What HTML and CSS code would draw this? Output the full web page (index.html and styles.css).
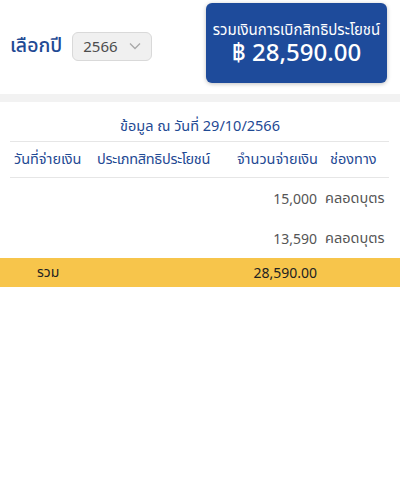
FILE: index.html
```html
<!DOCTYPE html>
<html lang="th">
<head>
<meta charset="utf-8">
<link rel="stylesheet" href="styles.css">
</head>
<body>
<div class="top">
  <div class="year">
    <span class="year-label">เลือกปี</span>
    <div class="select">
      <span>2566</span>
      <svg class="chev" width="12" height="8" viewBox="0 0 12 8"><path d="M1 1.5 L6 6.5 L11 1.5" fill="none" stroke="#a8a8a8" stroke-width="1.3"/></svg>
    </div>
  </div>
  <div class="card">
    <div class="card-title">รวมเงินการเบิกสิทธิประโยชน์</div>
    <div class="card-amount">฿ 28,590.00</div>
  </div>
</div>
<div class="band"></div>
<div class="info">ข้อมูล ณ วันที่ 29/10/2566</div>
<div class="table">
  <div class="row head">
    <div class="c1">วันที่จ่ายเงิน</div>
    <div class="c2">ประเภทสิทธิประโยชน์</div>
    <div class="c3">จำนวนจ่ายเงิน</div>
    <div class="c4">ช่องทาง</div>
  </div>
  <div class="row data">
    <div class="c1"></div>
    <div class="c2"></div>
    <div class="c3">15,000</div>
    <div class="c4">คลอดบุตร</div>
  </div>
  <div class="row data">
    <div class="c1"></div>
    <div class="c2"></div>
    <div class="c3">13,590</div>
    <div class="c4">คลอดบุตร</div>
  </div>
</div>
<div class="total">
  <div class="t1">รวม</div>
  <div class="t3">28,590.00</div>
</div>
</body>
</html>
```
FILE: styles.css
```css
* { box-sizing: border-box; }
body {
  margin: 0;
  background: #fff;
  font-family: "Noto Sans", "Noto Sans Thai", sans-serif;
  width: 400px;
}
.top {
  display: flex;
  justify-content: space-between;
  align-items: flex-start;
  height: 94px;
  padding: 3px 13px 0 10px;
}
.year {
  display: flex;
  align-items: center;
  gap: 10px;
  margin-top: 28px;
}
.year-label {
  color: #1f4a94;
  font-size: 19.5px;
  font-weight: 500;
}
.select {
  width: 80px;
  height: 29px;
  background: #f0f0f0;
  border: 1px solid #d9d9d9;
  border-radius: 6px;
  display: flex;
  align-items: center;
  justify-content: space-between;
  padding: 0 10px 0 10px;
  color: #4d4d4d;
  font-size: 15px;
}
.card {
  width: 181px;
  height: 80px;
  background: #1e4b9b;
  border-radius: 6px;
  box-shadow: 0 1px 4px rgba(0,0,0,0.25);
  color: #fff;
  display: flex;
  flex-direction: column;
  align-items: center;
  justify-content: center;
  gap: 0;
  padding-bottom: 2px;
}
.card-title { font-size: 15px; line-height: 20px; }
.card-amount { font-size: 24px; line-height: 26px; font-weight: 500; }
.band {
  height: 8px;
  background: #f2f2f2;
}
.info {
  text-align: center;
  color: #1f4a94;
  font-size: 14.5px;
  padding: 13px 0 0;
  height: 39px;
}
.table { margin: 0 11px 0 10px; }
.row {
  display: grid;
  grid-template-columns: 80px 138px 94px 67px;
  align-items: center;
  font-size: 14.5px;
}
.head {
  color: #1f4a94;
  border-top: 1px solid #e6e6e6;
  border-bottom: 1px solid #e6e6e6;
  height: 37px;
}
.head .c1 { padding-left: 4px; }
.head .c2 { padding-left: 7px; letter-spacing: -0.3px; }
.head .c3 { text-align: right; padding-right: 4px; white-space: nowrap; }
.head .c4 { padding-left: 8px; white-space: nowrap; }
.data {
  height: 40px;
  color: #555;
}
.data .c3 { text-align: right; padding-right: 5px; font-size: 14px; }
.data .c4 { padding-left: 3px; }
.total {
  height: 29px;
  background: #f7c54b;
  display: grid;
  grid-template-columns: 200px 120px;
  align-items: center;
  font-size: 14px;
  color: #222;
}
.t1 { padding-left: 37px; }
.t3 { text-align: right; padding-right: 3px; }
```
